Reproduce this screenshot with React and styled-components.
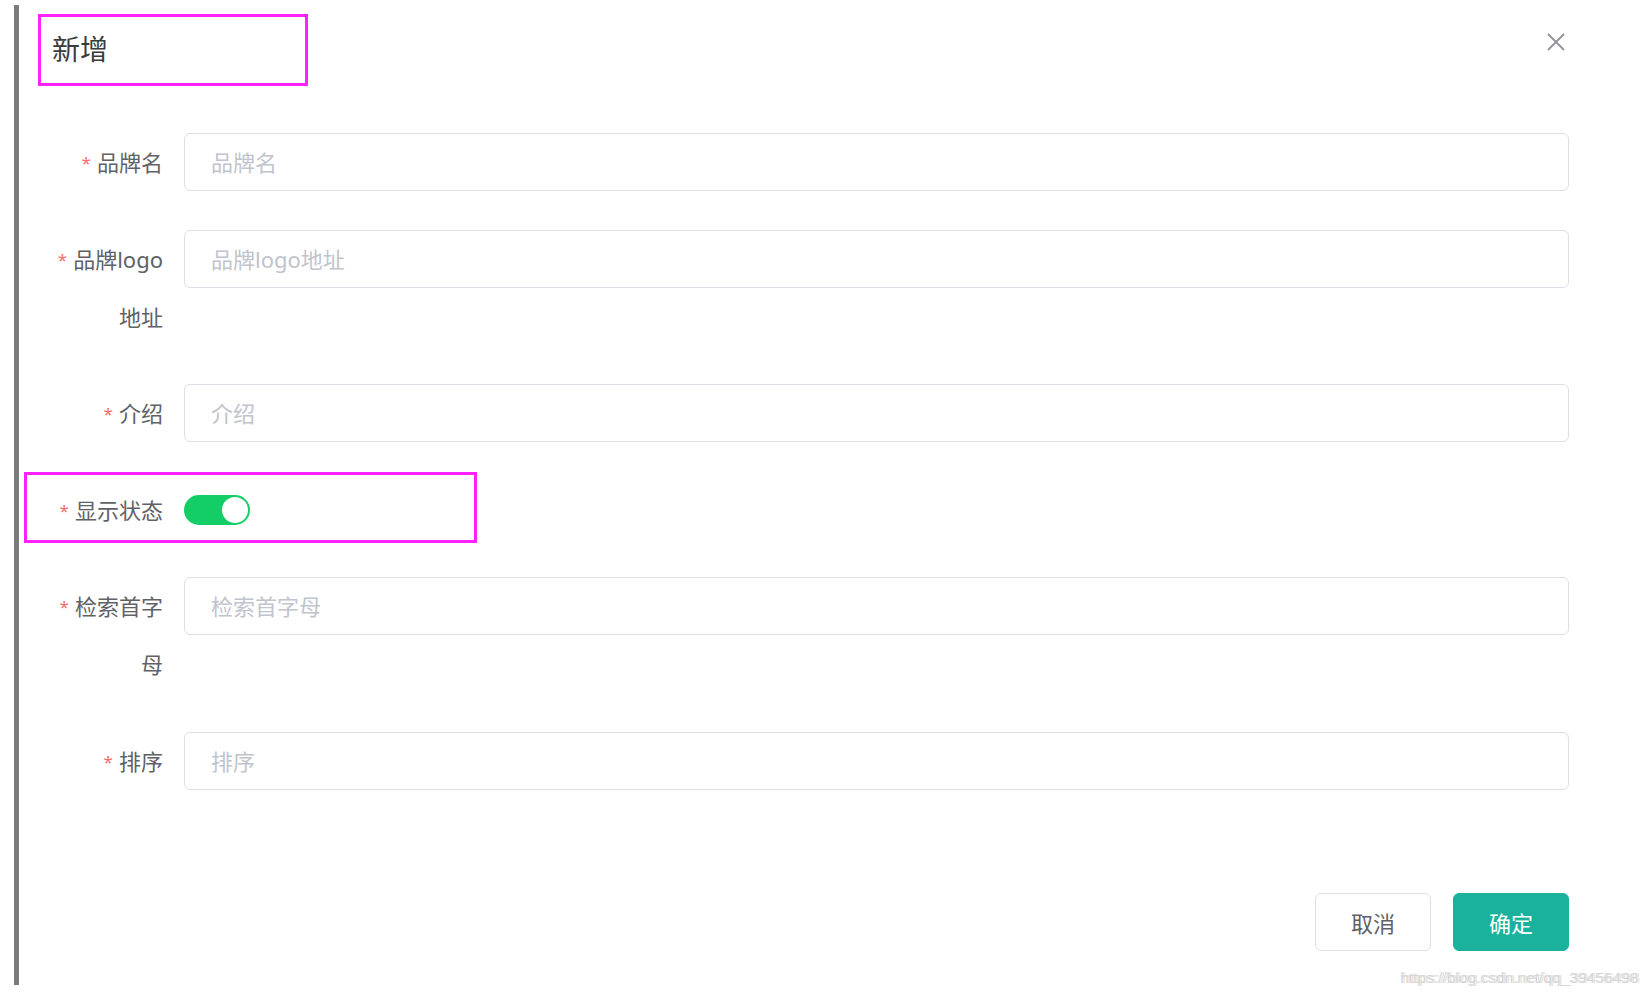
import React from 'react';

// package
import styled, { createGlobalStyle } from 'styled-components';

const fields = [
  { label: '品牌名', placeholder: '品牌名' },
  { label: '品牌logo地址', placeholder: '品牌logo地址' },
  { label: '介绍', placeholder: '介绍' },
  { label: '显示状态', type: 'switch', highlight: true },
  { label: '检索首字母', placeholder: '检索首字母' },
  { label: '排序', placeholder: '排序' },
];

function App() {
  return (
    <Page>
      <GlobalStyle />
      <SideBar />
      <Dialog>
        <Header>
          <Title>新增</Title>
          <CloseButton aria-label="close">
            <svg width="18" height="18" viewBox="0 0 18 18">
              <path d="M1 1 L17 17 M17 1 L1 17" stroke="#909399" strokeWidth="1.8" fill="none" />
            </svg>
          </CloseButton>
        </Header>
        <Form>
          {fields.map((f) => (
            <FormItem key={f.label} $highlight={f.highlight}>
              <Label>
                <Star>*</Star>
                {f.label}
              </Label>
              <Control>
                {f.type === 'switch' ? (
                  <Switch>
                    <Knob />
                  </Switch>
                ) : (
                  <Input placeholder={f.placeholder} />
                )}
              </Control>
            </FormItem>
          ))}
        </Form>
        <Footer>
          <Button>取消</Button>
          <Button $primary>确定</Button>
        </Footer>
      </Dialog>
      <Watermark>https://blog.csdn.net/qq_39456498</Watermark>
    </Page>
  );
}

export default App;

const GlobalStyle = createGlobalStyle`
    html, body {
        margin: 0;
        padding: 0;
        background: #fff;
    }
    body {
        font-family: "Noto Sans", "Noto Sans CJK SC", sans-serif;
    }
`;
const Page = styled.div`
    position: relative;
    display: flex;
    align-items: flex-start;
    width: 1649px;
    height: 998px;
    padding: 5px 0 0 14px;
    box-sizing: border-box;
    overflow: hidden;
`;
const SideBar = styled.div`
    width: 5px;
    height: 980px;
    background: #7b7b7b;
    flex-shrink: 0;
`;
const Dialog = styled.div`
    width: 1581px;
    display: flex;
    flex-direction: column;
`;
const Header = styled.div`
    display: flex;
    justify-content: space-between;
    align-items: flex-start;
    padding: 9px 35px 0 19px;
`;
const Title = styled.h2`
    margin: 0;
    width: 270px;
    height: 72px;
    box-sizing: border-box;
    border: 3px solid #ff22ff;
    padding: 0 0 4px 11px;
    display: flex;
    align-items: center;
    font-size: 28px;
    font-weight: 400;
    color: #3a3b3d;
`;
const CloseButton = styled.button`
    margin-top: 19px;
    padding: 0;
    border: none;
    background: none;
    width: 18px;
    height: 18px;
    display: flex;
`;
const Form = styled.div`
    margin-top: 47px;
    padding: 0 31px;
    display: flex;
    flex-direction: column;
    gap: 38.5px;
`;
const FormItem = styled.div`
    position: relative;
    display: grid;
    grid-template-columns: 134px 1fr;
    align-items: start;
    ${(p) => p.$highlight && `
    &::after {
        content: "";
        position: absolute;
        left: -26px;
        top: -9px;
        width: 453px;
        height: 71px;
        box-sizing: border-box;
        border: 3px solid #ff22ff;
        pointer-events: none;
    }
    `}
`;
const Label = styled.label`
    padding-right: 21px;
    text-align: right;
    font-size: 22px;
    line-height: 58px;
    color: #606266;
`;
const Star = styled.span`
    color: #f56c6c;
    font-size: 17px;
    line-height: 1;
    margin-right: 6px;
    vertical-align: 2px;
`;
const Control = styled.div`
    height: 58px;
    display: flex;
    align-items: center;
`;
const Input = styled.input`
    width: 100%;
    height: 58px;
    box-sizing: border-box;
    border: 1px solid #dcdfe6;
    border-radius: 6px;
    padding: 0 26px;
    font-family: "Noto Sans", "Noto Sans CJK SC", sans-serif;
    font-size: 22px;
    color: #606266;
    outline: none;
    &::placeholder {
        color: #c0c4cc;
    }
`;
const Switch = styled.div`
    width: 66px;
    height: 30px;
    border-radius: 15px;
    background: #13ce66;
    display: flex;
    align-items: center;
    justify-content: flex-end;
    padding: 0 2px;
    box-sizing: border-box;
`;
const Knob = styled.span`
    width: 26px;
    height: 26px;
    border-radius: 50%;
    background: #fff;
`;
const Footer = styled.div`
    display: flex;
    justify-content: flex-end;
    gap: 22px;
    padding: 103px 31px 0 0;
`;
const Button = styled.button`
    width: 116px;
    height: 58px;
    border-radius: 6px;
    border: 1px solid ${(p) => (p.$primary ? '#1bb29d' : '#dcdfe6')};
    background: ${(p) => (p.$primary ? '#1bb29d' : '#fff')};
    color: ${(p) => (p.$primary ? '#fff' : '#606266')};
    font-family: "Noto Sans", "Noto Sans CJK SC", sans-serif;
    font-size: 22px;
    padding: 0;
`;
const Watermark = styled.div`
    position: absolute;
    right: 11px;
    top: 969px;
    font-family: "Liberation Sans", sans-serif;
    font-size: 15.5px;
    color: #d6d6d6;
    text-shadow: 2px 0 0 #e4e4e4;
`;
